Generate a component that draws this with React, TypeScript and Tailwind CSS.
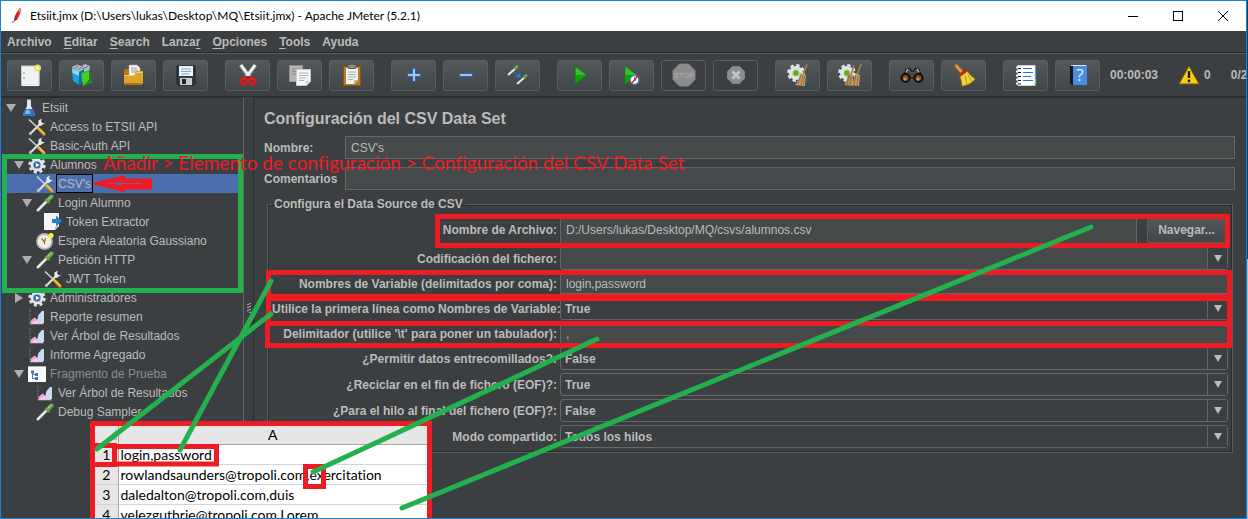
import React from "react";

/* ---------- toolbar drawings (26 x 24 canvas) ---------- */

function ToolSvg({ children }: { children: React.ReactNode }) {
  return (
    <svg viewBox="0 0 26 24" className="h-6 w-[26px]" aria-hidden="true">
      {children}
    </svg>
  );
}

function NewIcon() {
  return (
    <ToolSvg>
      <rect x="4.5" y="3" width="17" height="19" fill="#f1f1f1" stroke="#c9c9c9" />
      <path d="M5 22.5h17V4" fill="none" stroke="#fff" />
      <path d="M7 9v2M7 14v2" stroke="#8f8f8f" />
      <circle cx="20.500" cy="5" r="3.500" fill="#e8df62" />
      <circle cx="20.500" cy="5" r="1.500" fill="#fffde0" />
    </ToolSvg>
  );
}

function TemplatesIcon() {
  return (
    <ToolSvg>
      <path d="M3 4l5-2.500 4 1.500 4-2 5 2-1 6H5z" fill="#aebcc2" />
      <path d="M5 6l4-3M9 7l5-4M14 6l5-3" stroke="#5f7680" />
      <path d="M3 6l7 3v13l-6-4z" fill="#1ba1dc" />
      <path d="M3 6l7 3v4L3.500 10z" fill="#7fdcf7" />
      <path d="M10 9l5-3v13l-5 3z" fill="#0c6f9f" />
      <path d="M12 10l8-3 1 13-8-1z" fill="#38b22d" />
      <path d="M13 11l7-3 3 11-9 4z" fill="#45cf2b" />
      <path d="M20 8l3 10-9 5 6-6z" fill="#17801a" />
    </ToolSvg>
  );
}

function OpenIcon() {
  return (
    <ToolSvg>
      <path d="M3 8l1-2h7v5h11v3H3z" fill="#b57a10" />
      <path d="M8 2h8l3 3v10H8z" fill="#f7f7f7" stroke="#aaa" strokeWidth=".6" />
      <path d="M10 5h6M10 7h7M10 9h7" stroke="#9b9b9b" />
      <path d="M3 12h10l2-4h7v12l-2 2H4l-1-2z" fill="#dda32b" />
      <path d="M3.500 12.500h10l2-3h6" fill="none" stroke="#f7d377" />
      <path d="M4 21h16" stroke="#9b680b" strokeWidth="1.500" />
    </ToolSvg>
  );
}

function SaveIcon() {
  return (
    <ToolSvg>
      <path d="M4 3h18v18l-1 1H5l-1-1z" fill="#333b47" stroke="#1c1f25" />
      <rect x="6" y="3" width="14" height="10" fill="#e9f2fb" />
      <path d="M8 6h10M8 8.500h10M8 11h8" stroke="#87abd3" />
      <rect x="7" y="15" width="12" height="7" fill="#c9cacc" />
      <rect x="9" y="16" width="4" height="5" fill="#22262c" />
    </ToolSvg>
  );
}

function CutIcon() {
  return (
    <ToolSvg>
      <path d="M5.500 2l9 12M20.500 2l-9 12" stroke="#8d8f91" strokeWidth="4" />
      <path d="M6 2l8.500 12M20 2l-8.500 12" stroke="#f1f1f1" strokeWidth="2.800" />
      <path d="M11 13h4l2 3h-3l-1-1-1 1H9z" fill="#c80f12" />
      <ellipse cx="8.500" cy="18.500" rx="3" ry="2.800" fill="none" stroke="#e0181b" strokeWidth="2.600" />
      <ellipse cx="17.500" cy="18.500" rx="3" ry="2.800" fill="none" stroke="#e0181b" strokeWidth="2.600" />
    </ToolSvg>
  );
}

function CopyIcon() {
  return (
    <ToolSvg>
      <rect x="2.500" y="2.500" width="13" height="16" fill="#b4b6b6" stroke="#8e9090" />
      <path d="M5 6h8M5 8.500h8M5 11h6" stroke="#888" />
      <path d="M9.500 6.500h14v12l-4 4h-10z" fill="#f4f4f4" stroke="#c9c9c9" />
      <path d="M12 10h9M12 12.500h9M12 15h7M12 17.500h5" stroke="#b2b2b2" />
      <path d="M19 22v-4h4z" fill="#cfcfcf" />
    </ToolSvg>
  );
}

function PasteIcon() {
  return (
    <ToolSvg>
      <rect x="4.500" y="3.500" width="17" height="19" rx="1" fill="#c07a1b" stroke="#8a5412" />
      <path d="M7 5h12v12l-4 4H7z" fill="#f3f3f3" />
      <rect x="9" y="1.500" width="8" height="4" rx="1" fill="#8e8e83" stroke="#5b5b55" />
      <path d="M9 9h8M9 11.500h8M9 14h8M9 16.500h5" stroke="#a9a9a9" />
      <path d="M15 21v-4h4z" fill="#b9b9b9" />
    </ToolSvg>
  );
}

function PlusIcon() {
  return (
    <ToolSvg>
      <path d="M11.500 5.500h3v5h5v3h-5v5h-3v-5h-5v-3h5z" fill="#9fc4ec" stroke="#2a63b0" />
    </ToolSvg>
  );
}

function MinusIcon() {
  return (
    <ToolSvg>
      <rect x="6.500" y="10.500" width="13" height="3" fill="#9fc4ec" stroke="#2a63b0" />
    </ToolSvg>
  );
}

function ToggleIcon() {
  return (
    <ToolSvg>
      <path d="M3 12l8-7" stroke="#e5e5e5" strokeWidth="2.200" />
      <path d="M9.500 6l3.500-3.500" stroke="#6f9d50" strokeWidth="3" />
      <path d="M12 21l8-7" stroke="#e5e5e5" strokeWidth="2.200" />
      <path d="M18.500 15l3.500-3.500" stroke="#6f9d50" strokeWidth="3" />
      <path d="M9.500 9.500l4 3" stroke="#1d7df0" strokeWidth="1.500" strokeDasharray="1.500 1" />
      <path d="M15.500 9.500v5h-5z" fill="#1d7df0" />
    </ToolSvg>
  );
}

function StartIcon() {
  return (
    <ToolSvg>
      <path d="M8 3l12 9-12 9z" fill="#119c12" />
      <path d="M8.500 4l11 8h-11z" fill="#35bf30" />
      <path d="M8.500 12.500h11l-11 8z" fill="#06a806" />
      <path d="M8 3l12 9-12 9z" fill="none" stroke="#126b16" strokeWidth=".6" />
    </ToolSvg>
  );
}

function StartNoPausesIcon() {
  return (
    <ToolSvg>
      <path d="M6 3l12 9-12 9z" fill="#06a806" />
      <path d="M6.500 4l11 8h-11z" fill="#35bf30" />
      <circle cx="15.500" cy="17" r="4.300" fill="#fff" stroke="#4b86c0" strokeWidth="1.300" />
      <path d="M15.500 14v3h2" fill="none" stroke="#4b86c0" />
      <path d="M11 22l9-10" stroke="#d5272a" strokeWidth="1.400" />
    </ToolSvg>
  );
}

function StopIcon() {
  return (
    <ToolSvg>
      <path d="M8.500 1h9l6.500 6.500v9L17.500 23h-9L2 16.500v-9z" fill="#8c8c8c" stroke="#858585" />
      <text x="13" y="15" textAnchor="middle" fontSize="7.500" fontFamily="Liberation Sans, sans-serif" fontWeight="normal" fill="#b2b2b2">
        STOP
      </text>
    </ToolSvg>
  );
}

function ShutdownIcon() {
  return (
    <ToolSvg>
      <path d="M9.500 3.500h7l5 5v7l-5 5h-7l-5-5v-7z" fill="#8d8d8d" stroke="#858585" />
      <path d="M9.500 8.500l7 7M16.500 8.500l-7 7" stroke="#c6c6c6" strokeWidth="2.600" />
    </ToolSvg>
  );
}

function Gear({ cx, cy }: { cx: number; cy: number }) {
  return (
    <g>
      <circle cx={cx} cy={cy} r="7.200" fill="none" stroke="#e2e4e6" strokeWidth="3.400" strokeDasharray="3.200 2.455" />
      <circle cx={cx} cy={cy} r="7" fill="#e2e4e6" />
      <circle cx={cx} cy={cy} r="3.600" fill="#a9cf88" />
      <circle cx={cx} cy={cy} r="2.600" fill="#5cae1c" />
    </g>
  );
}

function ClearIcon() {
  return (
    <ToolSvg>
      <Gear cx={11} cy={10} />
      <path d="M22 1l-4 11" stroke="#a67c4c" strokeWidth="1.600" />
      <path d="M15 10l6 2-1 11-10-1c3-3 4-7 5-12z" fill="#c39a6b" />
      <path d="M16 12l-3 9M18 12l-2 10M19.500 13l-1 9" stroke="#8a6238" strokeWidth=".8" />
    </ToolSvg>
  );
}

function ClearAllIcon() {
  return (
    <ToolSvg>
      <Gear cx={10} cy={10} />
      <path d="M17 2l-3 10M24 1l-4 11" stroke="#a67c4c" strokeWidth="1.600" />
      <path d="M11 10l5 2v11l-9-1c3-3 3-7 4-12z" fill="#b78d5e" />
      <path d="M18 10l5 2-1 11-8-1c3-3 3-7 4-12z" fill="#c39a6b" />
      <path d="M12 12l-2 10M14 13l-1 9M19 12l-2 10M21 13l-1 9" stroke="#8a6238" strokeWidth=".8" />
    </ToolSvg>
  );
}

function SearchIcon() {
  return (
    <ToolSvg>
      <path d="M4 15l3-9 4-1 1 3h3l1-3 4 1 3 9z" fill="#4b4b4b" stroke="#111" />
      <path d="M7 9l2-3M18 6l2 3" stroke="#a9a9a9" strokeWidth="1.500" />
      <circle cx="6.500" cy="15" r="4" fill="#8d4b1d" stroke="#0e0e0e" strokeWidth="2" />
      <circle cx="19.500" cy="15" r="4" fill="#8d4b1d" stroke="#0e0e0e" strokeWidth="2" />
      <circle cx="6" cy="16" r="1.600" fill="#d98845" />
      <circle cx="19" cy="16" r="1.600" fill="#d98845" />
    </ToolSvg>
  );
}

function BroomIcon() {
  return (
    <ToolSvg>
      <path d="M5.500 3l6 7" stroke="#b8771f" strokeWidth="4" strokeLinecap="round" />
      <path d="M5 2.500l5 6" stroke="#e3ab54" strokeWidth="1.500" strokeLinecap="round" />
      <path d="M9 13l7-5c3 4 5 6 8 8-3 4-7 6-13 7 0-4-1-6-2-10z" fill="#f0d532" stroke="#a58a10" strokeWidth=".7" />
      <path d="M14 13l2 8M17 12l4 7" stroke="#a58a10" strokeWidth=".8" />
      <path d="M8.500 12.500l7-5" stroke="#cf2116" strokeWidth="2.800" />
    </ToolSvg>
  );
}

function FunctionHelperIcon() {
  return (
    <ToolSvg>
      <rect x="20" y="9" width="4" height="5" fill="#1e5ed0" />
      <rect x="20" y="16" width="4" height="5" fill="#199a24" />
      <rect x="5" y="2.500" width="17" height="20" fill="#fff" stroke="#d4d4d4" />
      <path d="M10 5.500h9M10 9.500h10M10 13.500h8M10 17.500h10" stroke="#2d6fe0" />
      <path d="M3 4.500h4M3 8.500h4M3 12.500h4M3 16.500h4M3 20.500h4" stroke="#f4f4f4" strokeWidth="2" />
      <path d="M5 5.500h3M5 9.500h3M5 13.500h3M5 17.500h3M5 21h3" stroke="#1d1d1d" />
    </ToolSvg>
  );
}

function HelpIcon() {
  return (
    <ToolSvg>
      <path d="M5 3l3-1v20l-3-1z" fill="#14171c" />
      <rect x="8" y="2" width="14" height="20" fill="#4a8de0" />
      <path d="M6 2.500h15" stroke="#dce6f0" />
      <text x="15" y="18" textAnchor="middle" fontSize="17" fontFamily="Open Sans, sans-serif" fontWeight="normal" fill="#e9f3ff">
        ?
      </text>
    </ToolSvg>
  );
}

/* ---------- tree drawings (18 x 18 canvas) ---------- */

function TreeSvg({ children }: { children: React.ReactNode }) {
  return (
    <svg viewBox="0 0 18 18" className="h-[18px] w-[18px] shrink-0" aria-hidden="true">
      {children}
    </svg>
  );
}

function FlaskIcon() {
  return (
    <TreeSvg>
      <path d="M7 1h4v6l4 8.500-1 1.500H4l-1-1.500L7 7z" fill="#dfe8ef" />
      <path d="M5.500 10h7l2.500 5.500-1 1.500H4l-1-1.500z" fill="#2c73c9" />
      <path d="M6.500 11h3l1 4h-6z" fill="#7fb5ec" />
      <path d="M7 .8h4" stroke="#9bb4c6" />
    </TreeSvg>
  );
}

function WrenchIcon() {
  return (
    <TreeSvg>
      <path d="M1.500 16.500L12 6" stroke="#e4e4e4" strokeWidth="2" />
      <path d="M10.500 7.500l2 .5 4.500-3-2.500 0-1.500-1.500L14 .5l-3.500 2z" fill="#e9e9e9" />
      <path d="M1 1.500L10 10" stroke="#dadada" strokeWidth="1.400" />
      <path d="M10.500 10.500l5.500 5.500" stroke="#e9a916" strokeWidth="3" strokeLinecap="round" />
      <path d="M11 10l5 5" stroke="#f6d263" />
      <path d="M1.500 14l2 2.500" stroke="#b5b5b5" strokeWidth="1.500" />
    </TreeSvg>
  );
}

function ThreadGroupIcon() {
  return (
    <TreeSvg>
      <circle cx="9" cy="9" r="7.300" fill="none" stroke="#dadde0" strokeWidth="2.800" strokeDasharray="3.200 2.533" />
      <circle cx="9" cy="9" r="6.500" fill="#e4e8ec" />
      <circle cx="9" cy="9" r="4" fill="#9db4cf" />
      <circle cx="9" cy="9" r="3.300" fill="#2f62a3" />
      <path d="M7.800 6.800l4 2.200-4 2.200z" fill="#fff" />
    </TreeSvg>
  );
}

function DropperIcon() {
  return (
    <TreeSvg>
      <path d="M1.500 16.500l9.500-9.500" stroke="#7f8683" strokeWidth="3.400" />
      <path d="M1 17L11 7" stroke="#f0f2f0" strokeWidth="2" />
      <path d="M10 5.500l3 3" stroke="#5f9a45" strokeWidth="2" strokeLinecap="round" />
      <path d="M11.500 6.500L15.500 2.500" stroke="#6ba94f" strokeWidth="4" strokeLinecap="round" />
      <path d="M12 5l2.500-2.500" stroke="#b4dc9a" strokeLinecap="round" />
    </TreeSvg>
  );
}

function ExtractorIcon() {
  return (
    <TreeSvg>
      <path d="M0 0h15v13l-4 4H0z" fill="#f6f6f6" />
      <path d="M11 17v-3l4-1z" fill="#b5b5b5" />
      <path d="M8 6h4V2.500L18 8l-6 5.500V10H8z" fill="#2480cf" />
    </TreeSvg>
  );
}

function TimerIcon() {
  return (
    <TreeSvg>
      <circle cx="8.500" cy="9.500" r="7.500" fill="#f3efe4" stroke="#b4b6b8" strokeWidth="1.800" />
      <path d="M5.500 6.500l3 3.500 1-4M8.500 10v2" fill="none" stroke="#8a6d2a" strokeWidth="1.200" />
      <circle cx="15" cy="3.500" r="2.600" fill="#f4ee3d" />
    </TreeSvg>
  );
}

function ReportIcon() {
  return (
    <TreeSvg>
      <path d="M2 1v15.500h14" fill="none" stroke="#9c9c9c" strokeWidth=".8" strokeDasharray="1 1" />
      <path d="M2.500 16v-3l4-3.500 3 2.500 5.500-2v6z" fill="#efa6dc" />
      <path d="M9 13l1.500-6 3.500-4h2v12l-4 1z" fill="#c8dcf5" />
      <path d="M3 15.500l5-3 3 3z" fill="#f8d3ef" />
    </TreeSvg>
  );
}

function FragmentIcon() {
  return (
    <TreeSvg>
      <rect x="0" y="1" width="18" height="16" fill="#fafafa" />
      <path d="M0 1.500h18" stroke="#9fb4c4" />
      <path d="M4.500 7v7M4.500 9.500h3M4.500 13.500h3" fill="none" stroke="#777" />
      <rect x="3" y="5.500" width="3" height="3" fill="#3f79bd" />
      <rect x="7" y="8" width="3" height="3" fill="#3f79bd" />
      <rect x="7" y="12" width="3" height="3" fill="#3f79bd" />
    </TreeSvg>
  );
}

/* ---------- data ---------- */

const menus: { before: string; key: string; after: string }[] = [
  { before: "Archivo", key: "", after: "" },
  { before: "", key: "E", after: "ditar" },
  { before: "", key: "S", after: "earch" },
  { before: "Lanza", key: "r", after: "" },
  { before: "", key: "O", after: "pciones" },
  { before: "", key: "T", after: "ools" },
  { before: "Ayuda", key: "", after: "" },
];

type Tool = { label: string; icon: React.ReactNode; flat?: boolean };

const toolGroups: Tool[][] = [
  [
    { label: "Nuevo", icon: <NewIcon /> },
    { label: "Plantillas", icon: <TemplatesIcon /> },
    { label: "Abrir", icon: <OpenIcon /> },
    { label: "Guardar", icon: <SaveIcon /> },
  ],
  [
    { label: "Cortar", icon: <CutIcon /> },
    { label: "Copiar", icon: <CopyIcon /> },
    { label: "Pegar", icon: <PasteIcon /> },
  ],
  [
    { label: "Expandir", icon: <PlusIcon /> },
    { label: "Contraer", icon: <MinusIcon /> },
    { label: "Conmutar", icon: <ToggleIcon /> },
  ],
  [
    { label: "Arrancar", icon: <StartIcon /> },
    { label: "Arrancar sin pausas", icon: <StartNoPausesIcon /> },
    { label: "Parar", icon: <StopIcon />, flat: true },
    { label: "Interrumpir", icon: <ShutdownIcon />, flat: true },
  ],
  [
    { label: "Limpiar", icon: <ClearIcon /> },
    { label: "Limpiar todo", icon: <ClearAllIcon /> },
  ],
  [
    { label: "Buscar", icon: <SearchIcon /> },
    { label: "Limpiar búsqueda", icon: <BroomIcon /> },
  ],
  [
    { label: "Ayuda de funciones", icon: <FunctionHelperIcon /> },
    { label: "Ayuda", icon: <HelpIcon /> },
  ],
];

type Node = {
  text: string;
  icon: React.ReactNode;
  indent: string;
  toggle?: "open" | "closed";
  selected?: boolean;
  dim?: boolean;
};

const nodes: Node[] = [
  { text: "Etsiit", icon: <FlaskIcon />, indent: "pl-1", toggle: "open" },
  { text: "Access to ETSII API", icon: <WrenchIcon />, indent: "pl-3" },
  { text: "Basic-Auth API", icon: <WrenchIcon />, indent: "pl-3" },
  { text: "Alumnos", icon: <ThreadGroupIcon />, indent: "pl-3", toggle: "open" },
  { text: "CSV's", icon: <WrenchIcon />, indent: "pl-5", selected: true },
  { text: "Login Alumno", icon: <DropperIcon />, indent: "pl-5", toggle: "open" },
  { text: "Token Extractor", icon: <ExtractorIcon />, indent: "pl-7" },
  { text: "Espera Aleatoria Gaussiano", icon: <TimerIcon />, indent: "pl-5" },
  { text: "Petición HTTP", icon: <DropperIcon />, indent: "pl-5", toggle: "open" },
  { text: "JWT Token", icon: <WrenchIcon />, indent: "pl-7" },
  { text: "Administradores", icon: <ThreadGroupIcon />, indent: "pl-3", toggle: "closed" },
  { text: "Reporte resumen", icon: <ReportIcon />, indent: "pl-3" },
  { text: "Ver Árbol de Resultados", icon: <ReportIcon />, indent: "pl-3" },
  { text: "Informe Agregado", icon: <ReportIcon />, indent: "pl-3" },
  { text: "Fragmento de Prueba", icon: <FragmentIcon />, indent: "pl-3", toggle: "open", dim: true },
  { text: "Ver Árbol de Resultados", icon: <ReportIcon />, indent: "pl-5" },
  { text: "Debug Sampler", icon: <DropperIcon />, indent: "pl-5" },
];

const sheetRows = [
  "login,password",
  "rowlandsaunders@tropoli.com,exercitation",
  "daledalton@tropoli.com,duis",
  "velezguthrie@tropoli.com,Lorem",
];

/* ---------- window parts ---------- */

function TitleBar() {
  return (
    <header className="flex h-[30px] shrink-0 items-center bg-white text-black">
      <svg viewBox="0 0 16 18" className="ml-[7px] h-[18px] w-4" aria-hidden="true">
        <path d="M12 1c2 1 1 3 0 6l-3 6-3 1 1-5c1-3 3-6 5-8z" fill="#d3212f" />
        <path d="M12 1c2 1 1 3 0 5l-2-2z" fill="#f08a2c" />
        <path d="M8 9l-1 5-1 0 1-5z" fill="#8b1d6a" />
        <path d="M5.500 14l-1 2" stroke="#555" />
      </svg>
      <h1 className="ml-[6px] grow text-[12px] font-normal [font-family:Lato,sans-serif]">
        Etsiit.jmx (D:\Users\lukas\Desktop\MQ\Etsiit.jmx) - Apache JMeter (5.2.1)
      </h1>
      <button aria-label="Minimizar" className="flex h-full w-[45px] items-center justify-center">
        <svg viewBox="0 0 10 10" className="size-[10px]"><path d="M0 5.500h10" stroke="#000" /></svg>
      </button>
      <button aria-label="Maximizar" className="flex h-full w-[45px] items-center justify-center">
        <svg viewBox="0 0 10 10" className="size-[10px]"><rect x=".5" y=".5" width="9" height="9" fill="none" stroke="#000" /></svg>
      </button>
      <button aria-label="Cerrar" className="flex h-full w-[46px] items-center justify-center">
        <svg viewBox="0 0 10 10" className="size-[10px]"><path d="M0 0l10 10M10 0L0 10" stroke="#000" /></svg>
      </button>
    </header>
  );
}

function MenuBar() {
  return (
    <nav className="flex h-[22px] shrink-0 items-center gap-3 border-b border-[#26282a] pl-1.5 text-[12px] font-bold">
      {menus.map((m) => (
        <button key={m.before + m.key + m.after} className="leading-4">
          {m.before}
          {m.key && <span className="underline underline-offset-2">{m.key}</span>}
          {m.after}
        </button>
      ))}
    </nav>
  );
}

function Toolbar() {
  return (
    <div className="flex h-11 shrink-0 items-center overflow-hidden border-t border-[#5b5e60] border-b border-b-[#2a2c2e] pl-1.5 text-[12px] font-bold">
      <div className="flex shrink-0 gap-[17px]">
        {toolGroups.map((group, i) => (
          <div key={i} className="flex gap-[7px]">
            {group.map((tool) => (
              <button
                key={tool.label}
                aria-label={tool.label}
                className={
                  tool.flat
                    ? "flex h-[31px] w-[45px] items-center justify-center rounded-[3px] border border-[#5a5d5f]"
                    : "flex h-[31px] w-[45px] items-center justify-center rounded-[3px] border border-[#5a5d5f] bg-linear-to-b from-[#53585a] to-[#414648]"
                }
              >
                {tool.icon}
              </button>
            ))}
          </div>
        ))}
      </div>
      <span className="ml-[10px] shrink-0">00:00:03</span>
      <svg viewBox="0 0 22 20" className="ml-5 h-5 w-[22px] shrink-0" aria-hidden="true">
        <path d="M11 1l10 18H1z" fill="#f7ce12" stroke="#6d5700" strokeLinejoin="round" />
        <path d="M11 6v7" stroke="#1c1800" strokeWidth="2.400" />
        <circle cx="11" cy="16" r="1.400" fill="#1c1800" />
      </svg>
      <span className="ml-1 shrink-0">0</span>
      <span className="ml-5 shrink-0">0/20</span>
    </div>
  );
}

function TreePanel() {
  return (
    <aside className="w-[243px] shrink-0 border-t border-r border-t-[#2a2c2e] border-r-[#646668] pl-px">
      <ul className="text-[12px]">
        {nodes.map((n, i) => (
          <li
            key={i}
            className={
              n.selected
                ? `flex h-[19px] items-center bg-[#4b6eaf] ${n.indent}`
                : `flex h-[19px] items-center ${n.indent}`
            }
          >
            <span className="flex w-[14px] shrink-0 items-center">
              {n.toggle && (
                <svg viewBox="0 0 10 10" className="size-[10px]" aria-hidden="true">
                  <path d={n.toggle === "open" ? "M0 1h10L5 9z" : "M1 0l8 5-8 5z"} fill="#adadad" />
                </svg>
              )}
            </span>
            {n.icon}
            <span
              className={
                n.selected
                  ? "ml-[2px] border border-black px-px pt-[2px] leading-[15px] whitespace-nowrap"
                  : n.dim
                    ? "ml-[4px] pt-[2px] leading-[17px] whitespace-nowrap text-[#8c8c8c]"
                    : "ml-[4px] pt-[2px] leading-[17px] whitespace-nowrap"
              }
            >
              {n.text}
            </span>
          </li>
        ))}
      </ul>
    </aside>
  );
}

const textField =
  "w-full min-w-0 border border-[#646668] bg-[#45494a] px-[5px] text-[12px] text-[#bbbbbb] outline-none";

function Combo({ id, options, editable }: { id: string; options: string[]; editable?: boolean }) {
  return (
    <div className="relative h-[23px]">
      <select
        id={id}
        className={
          editable
            ? "h-full w-full appearance-none rounded-[3px] border border-[#646668] bg-[#45494a] px-1 text-[12px] font-bold text-[#bbbbbb]"
            : "h-full w-full appearance-none rounded-[3px] border border-[#646668] bg-[#3c3f41] px-1 text-[12px] font-bold text-[#bbbbbb]"
        }
      >
        {options.map((o) => (
          <option key={o}>{o}</option>
        ))}
      </select>
      <span className="pointer-events-none absolute inset-y-px right-px flex w-5 items-center justify-center border-l border-[#646668] bg-[#3c3f41]">
        <svg viewBox="0 0 8 7" className="h-[7px] w-2" aria-hidden="true">
          <path d="M0 0h8L4 7z" fill="#bbbbbb" />
        </svg>
      </span>
    </div>
  );
}

function RowLabel({ id, children }: { id: string; children: React.ReactNode }) {
  return (
    <label htmlFor={id} className="text-right leading-4 whitespace-nowrap">
      {children}
    </label>
  );
}

function ConfigPanel() {
  return (
    <main className="min-w-0 grow border-t border-l border-[#2a2c2e] pr-[11px] pl-[10px] text-[12px] font-bold">
      <h2 className="pt-[9px] text-[16px] leading-6">Configuración del CSV Data Set</h2>
      <div className="mt-[5px] grid grid-cols-[73px_minmax(0,1fr)] items-center gap-x-2 gap-y-2">
        <label htmlFor="name">Nombre:</label>
        <input id="name" defaultValue="CSV's" className={`${textField} h-[23px] font-normal`} />
        <label htmlFor="comments">Comentarios</label>
        <input id="comments" className={`${textField} h-[23px] font-normal`} />
      </div>
      <fieldset className="mt-[6px] mr-[2px] ml-[3px] min-w-0 border border-[#5b5e60] pr-1 pb-1 pl-1 shadow-[inset_0_0_0_1px_#2a2c2e]">
        <legend className="px-0.5 leading-4">Configura el Data Source de CSV</legend>
        <div className="mt-1 grid grid-cols-[285px_minmax(0,1fr)] items-center gap-x-[3px] gap-y-[3px]">
          <RowLabel id="file">Nombre de Archivo:</RowLabel>
          <div className="flex items-center gap-[10px]">
            <input id="file" defaultValue="D:/Users/lukas/Desktop/MQ/csvs/alumnos.csv" className={`${textField} h-7 font-normal`} />
            <button className="mr-0.5 h-[26px] w-[79px] shrink-0 rounded-[3px] border border-[#5a5d5f] bg-linear-to-b from-[#53585a] to-[#414648]">
              Navegar...
            </button>
          </div>
          <RowLabel id="encoding">Codificación del fichero:</RowLabel>
          <Combo id="encoding" options={["", "UTF-8"]} editable />
          <RowLabel id="vars">Nombres de Variable (delimitados por coma):</RowLabel>
          <input id="vars" defaultValue="login,password" className={`${textField} h-[21px] font-normal`} />
          <RowLabel id="first">Utilice la primera línea como Nombres de Variable:</RowLabel>
          <Combo id="first" options={["True", "False"]} />
          <RowLabel id="delim">Delimitador (utilice '\t' para poner un tabulador):</RowLabel>
          <input id="delim" defaultValue="," className={`${textField} h-[21px] font-normal`} />
          <RowLabel id="quoted">¿Permitir datos entrecomillados?:</RowLabel>
          <Combo id="quoted" options={["False", "True"]} />
          <RowLabel id="recycle">¿Reciclar en el fin de fichero (EOF)?:</RowLabel>
          <Combo id="recycle" options={["True", "False"]} />
          <RowLabel id="stop">¿Para el hilo al final del fichero (EOF)?:</RowLabel>
          <Combo id="stop" options={["False", "True"]} />
          <RowLabel id="share">Modo compartido:</RowLabel>
          <Combo id="share" options={["Todos los hilos"]} />
        </div>
      </fieldset>
    </main>
  );
}

/* Spreadsheet clipping pasted over the window */
function Sheet() {
  return (
    <div className="absolute top-[421px] bottom-px left-[90px] w-[342px] overflow-hidden border-5 border-b-0 border-[#ed1c24] bg-white text-black [font-family:Lato,sans-serif] [font-variant-ligatures:none]">
      <table className="w-full border-collapse text-[14px] leading-[18px]">
        <thead>
          <tr className="h-[18px] border-b border-[#a6a6a6] bg-[#e6e6e6]">
            <th className="w-[23px] border-r border-[#a6a6a6] p-0">
              <svg viewBox="0 0 12 12" className="ml-auto size-3" aria-hidden="true">
                <path d="M11 0v11H0z" fill="#b4b4b4" />
              </svg>
            </th>
            <th className="p-0 font-normal">A</th>
          </tr>
        </thead>
        <tbody>
          {sheetRows.map((row, i) => (
            <tr key={row} className="h-5 border-b border-[#d4d4d4]">
              <th className="border-r border-[#a6a6a6] bg-[#e6e6e6] p-0 font-normal">{i + 1}</th>
              <td className="p-0 pl-0.5 whitespace-nowrap">{row}</td>
            </tr>
          ))}
        </tbody>
      </table>
    </div>
  );
}

/* Hand-drawn marks lying over the window */
function Marks() {
  return (
    <svg className="pointer-events-none absolute top-0 left-0 h-full w-full" aria-hidden="true">
      <g fill="none" strokeWidth="5">
        <g stroke="#ed1c24">
          <rect x="437.500" y="216.500" width="790" height="29" />
          <rect x="268.500" y="272.500" width="961" height="24" />
          <rect x="268.500" y="298.500" width="961" height="25" />
          <rect x="267.500" y="323.500" width="962" height="22" />
          <rect x="92.500" y="445.500" width="22" height="19" />
          <rect x="114.500" y="446.500" width="102" height="17.500" />
          <rect x="305.500" y="466.500" width="18" height="20" />
        </g>
        <rect x="4.500" y="156.500" width="236" height="134" stroke="#22b14c" />
        <g stroke="#22b14c" strokeLinecap="round">
          <path d="M271 281L180 450" />
          <path d="M271 314L97 449" />
          <path d="M597 339L382 440L313 472" />
          <path d="M1091 227L402 508" />
        </g>
      </g>
      <path
        d="M94 183.500L124 176.500V179.500H151V188.500H124V191z"
        fill="#ed1c24"
        stroke="#ed1c24"
        strokeWidth="2"
        strokeLinejoin="round"
      />
      <path d="M108 183.500h34" stroke="#8a5a8f" />
      <ellipse cx="119" cy="183.500" rx="3" ry="1.500" fill="#4b6eaf" />
    </svg>
  );
}

export default function App() {
  return (
    <div className="relative flex h-screen w-full overflow-hidden bg-[#3c3f41] text-[#bbbbbb] [font-family:'Liberation_Sans',Arial,sans-serif]">
      <div className="flex min-w-0 grow flex-col border border-[#1883d7]">
        <TitleBar />
        <MenuBar />
        <Toolbar />
        <div className="flex min-h-0 grow">
          <TreePanel />
          <div className="flex w-[9px] shrink-0 items-center justify-center">
            <svg viewBox="0 0 4 10" className="h-[10px] w-1" aria-hidden="true">
              <path d="M0 2l4-2M0 5l4-2M0 8l4-2M0 11l4-2" stroke="#d0d0d0" strokeWidth=".8" />
            </svg>
          </div>
          <ConfigPanel />
        </div>
      </div>
      <div className="w-px shrink-0 bg-linear-to-b from-[#1b3a5c] from-50% to-[#8ab8e8] to-50%" />
      <Sheet />
      <Marks />
      <p className="absolute top-[151px] left-[103px] text-[19px] leading-6 whitespace-nowrap text-[#ed1c24] [font-family:Lato,sans-serif] [font-variant-ligatures:none]">
        Añadir &gt; Elemento de configuración &gt; Configuración del CSV Data Set
      </p>
    </div>
  );
}
